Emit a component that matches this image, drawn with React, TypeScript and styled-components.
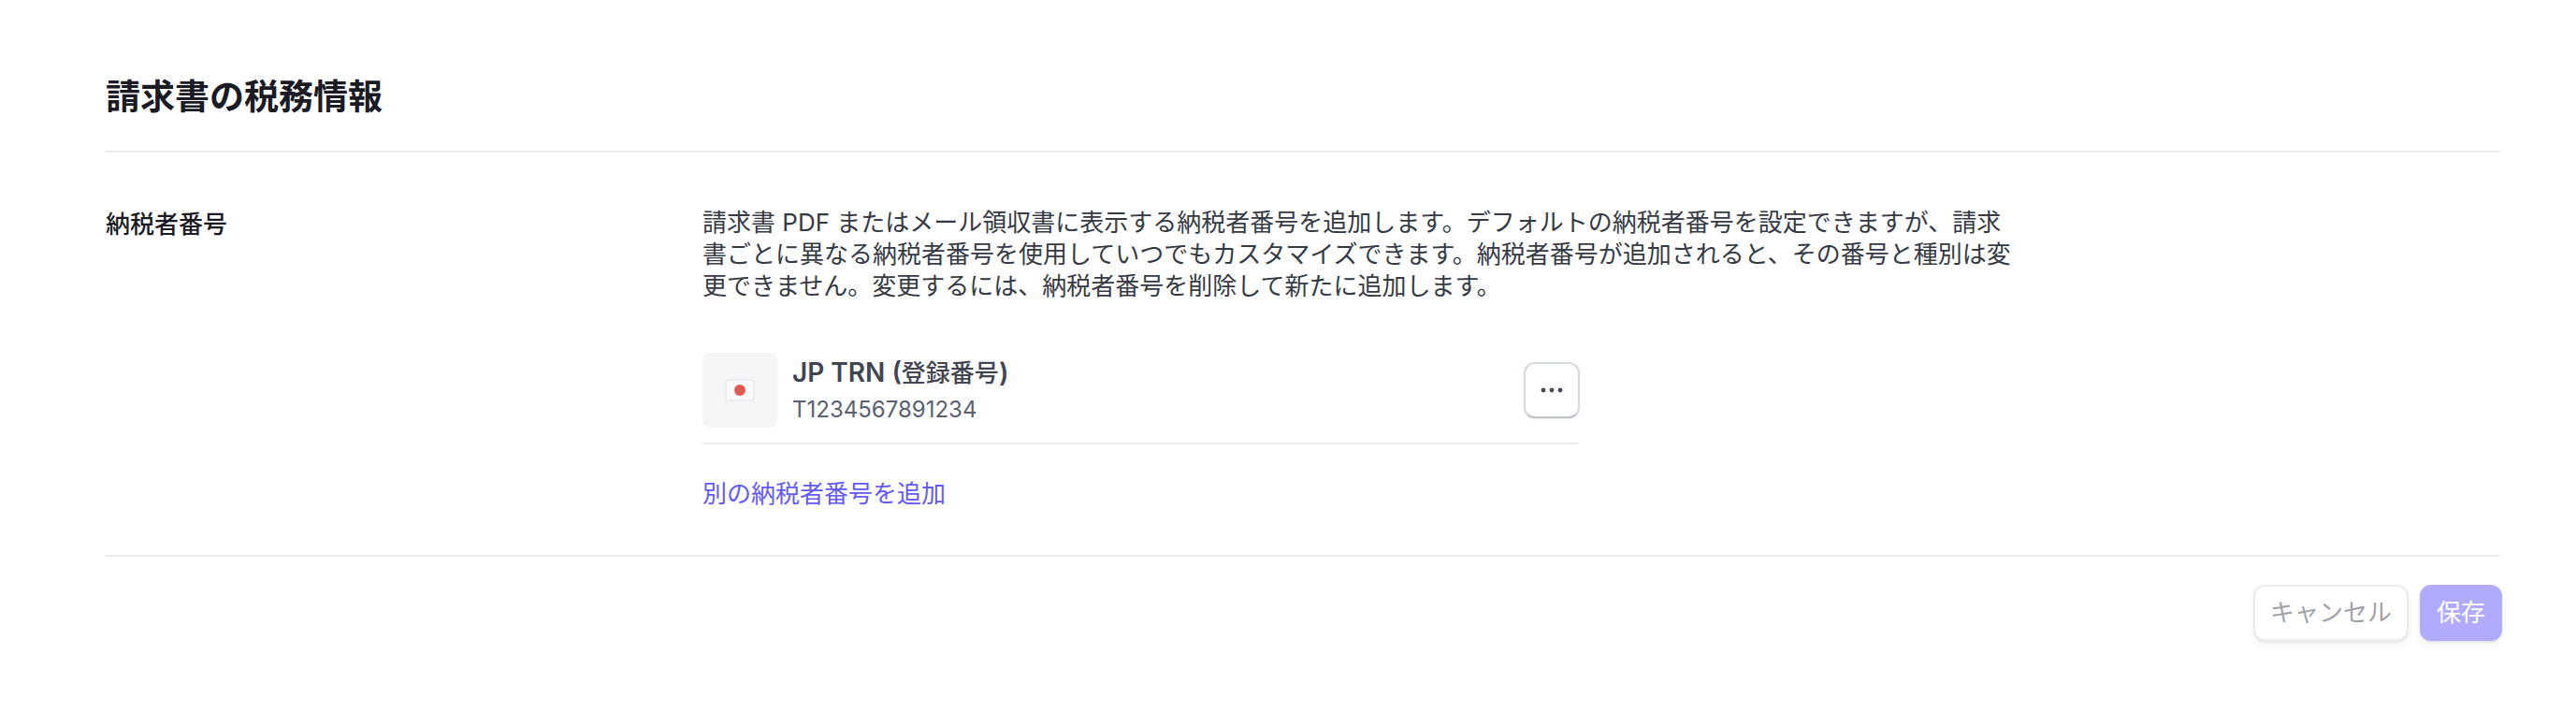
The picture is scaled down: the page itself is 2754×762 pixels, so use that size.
import React from "react";
import styled, { createGlobalStyle } from "styled-components";

const GlobalStyle = createGlobalStyle`
  *, *::before, *::after { box-sizing: border-box; }
  body {
    margin: 0;
    background: #ffffff;
    color: #1a1b25;
    font-family: Inter, "Noto Sans CJK JP", sans-serif;
    font-size: 26px;
    line-height: 34px;
  }
  button { font: inherit; }
`;

const Page = styled.main`
  padding: 80px 81px 76px 113px;
`;

const Title = styled.h2`
  margin: 0;
  padding-bottom: 33px;
  border-bottom: 2px solid #ebeef1;
  font-size: 37px;
  line-height: 48px;
  font-weight: 700;
`;

const Setting = styled.section`
  display: grid;
  grid-template-columns: 638px 1fr;
  padding: 58px 0 48px;
  border-bottom: 2px solid #ebeef1;
`;

const SettingName = styled.h3`
  margin: 0;
  padding-top: 2px;
  font-size: 26px;
  line-height: 34px;
  font-weight: 500;
`;

const Description = styled.p`
  margin: 0;
  max-width: 1408px;
  color: #353a44;
`;

const TaxIdList = styled.ul`
  list-style: none;
  margin: 54px 0 0;
  padding: 0;
  max-width: 936px;
`;

const TaxIdItem = styled.li`
  display: flex;
  align-items: center;
  gap: 16px;
  padding-bottom: 16px;
  border-bottom: 2px solid #ebeef1;
`;

const FlagTile = styled.div`
  display: grid;
  place-items: center;
  width: 80px;
  height: 80px;
  border-radius: 8px;
  background: #f5f6f8;
`;

const TaxIdText = styled.div`
  flex: 1;
`;

const TaxIdType = styled.div`
  color: #414552;
  font-size: 28px;
  font-weight: 600;
  line-height: 40px;
`;

const TaxIdTypeName = styled.span`
  font-size: 26px;
  font-weight: 500;
`;

const TaxIdValue = styled.div`
  color: #596171;
  font-size: 24px;
  line-height: 38px;
`;

const Button = styled.button<{ $primary?: boolean }>`
  height: 60px;
  padding: 0 16px;
  border: 2px solid ${(p) => (p.$primary ? "#b1abff" : "#ececee")};
  border-radius: 12px;
  background: ${(p) => (p.$primary ? "#b1abff" : "#ffffff")};
  color: ${(p) => (p.$primary ? "#ffffff" : "#a0a2a8")};
  line-height: 34px;
  box-shadow: 0 2px 2px rgba(0, 0, 0, 0.06), 0 4px 10px rgba(48, 49, 61, 0.06);
`;

const MenuButton = styled.button`
  display: grid;
  place-items: center;
  width: 60px;
  height: 60px;
  margin-right: -2px;
  padding: 0;
  border: 2px solid #d5dbe1;
  border-bottom-color: #c0c5cb;
  border-radius: 12px;
  background: #ffffff;
  box-shadow: 0 1px 2px rgba(0, 0, 0, 0.1);
`;

const AddLink = styled.a`
  display: inline-block;
  margin-top: 36px;
  color: #625afa;
  text-decoration: none;
`;

const Actions = styled.footer`
  display: flex;
  justify-content: flex-end;
  gap: 12px;
  margin-right: -2px;
  padding-top: 30px;
`;

const JapanFlag = () => (
  <svg width="32" height="24" viewBox="0 0 32 24" role="img" aria-label="日本">
    <rect x="1" y="1" width="30" height="22" rx="3" fill="#f9f9fd" stroke="#ebedf3" strokeWidth="2" />
    <circle cx="16" cy="12" r="6" fill="#e25950" />
  </svg>
);

const MoreIcon = () => (
  <svg width="24" height="24" viewBox="0 0 24 24" fill="#474b58" aria-hidden="true">
    <circle cx="3" cy="12" r="2.4" />
    <circle cx="12" cy="12" r="2.4" />
    <circle cx="21" cy="12" r="2.4" />
  </svg>
);

export default function App() {
  return (
    <>
      <GlobalStyle />
      <Page lang="ja">
        <Title>請求書の税務情報</Title>
        <Setting>
          <SettingName>納税者番号</SettingName>
          <div>
            <Description>
              請求書 PDF またはメール領収書に表示する納税者番号を追加します。デフォルトの納税者番号を設定できますが、請求書ごとに異なる納税者番号を使用していつでもカスタマイズできます。納税者番号が追加されると、その番号と種別は変更できません。変更するには、納税者番号を削除して新たに追加します。
            </Description>
            <TaxIdList>
              <TaxIdItem>
                <FlagTile>
                  <JapanFlag />
                </FlagTile>
                <TaxIdText>
                  <TaxIdType>
                    JP TRN (<TaxIdTypeName>登録番号</TaxIdTypeName>)
                  </TaxIdType>
                  <TaxIdValue>T1234567891234</TaxIdValue>
                </TaxIdText>
                <MenuButton type="button" aria-label="その他の操作">
                  <MoreIcon />
                </MenuButton>
              </TaxIdItem>
            </TaxIdList>
            <AddLink href="#add">別の納税者番号を追加</AddLink>
          </div>
        </Setting>
        <Actions>
          <Button type="button">キャンセル</Button>
          <Button type="button" $primary>保存</Button>
        </Actions>
      </Page>
    </>
  );
}
